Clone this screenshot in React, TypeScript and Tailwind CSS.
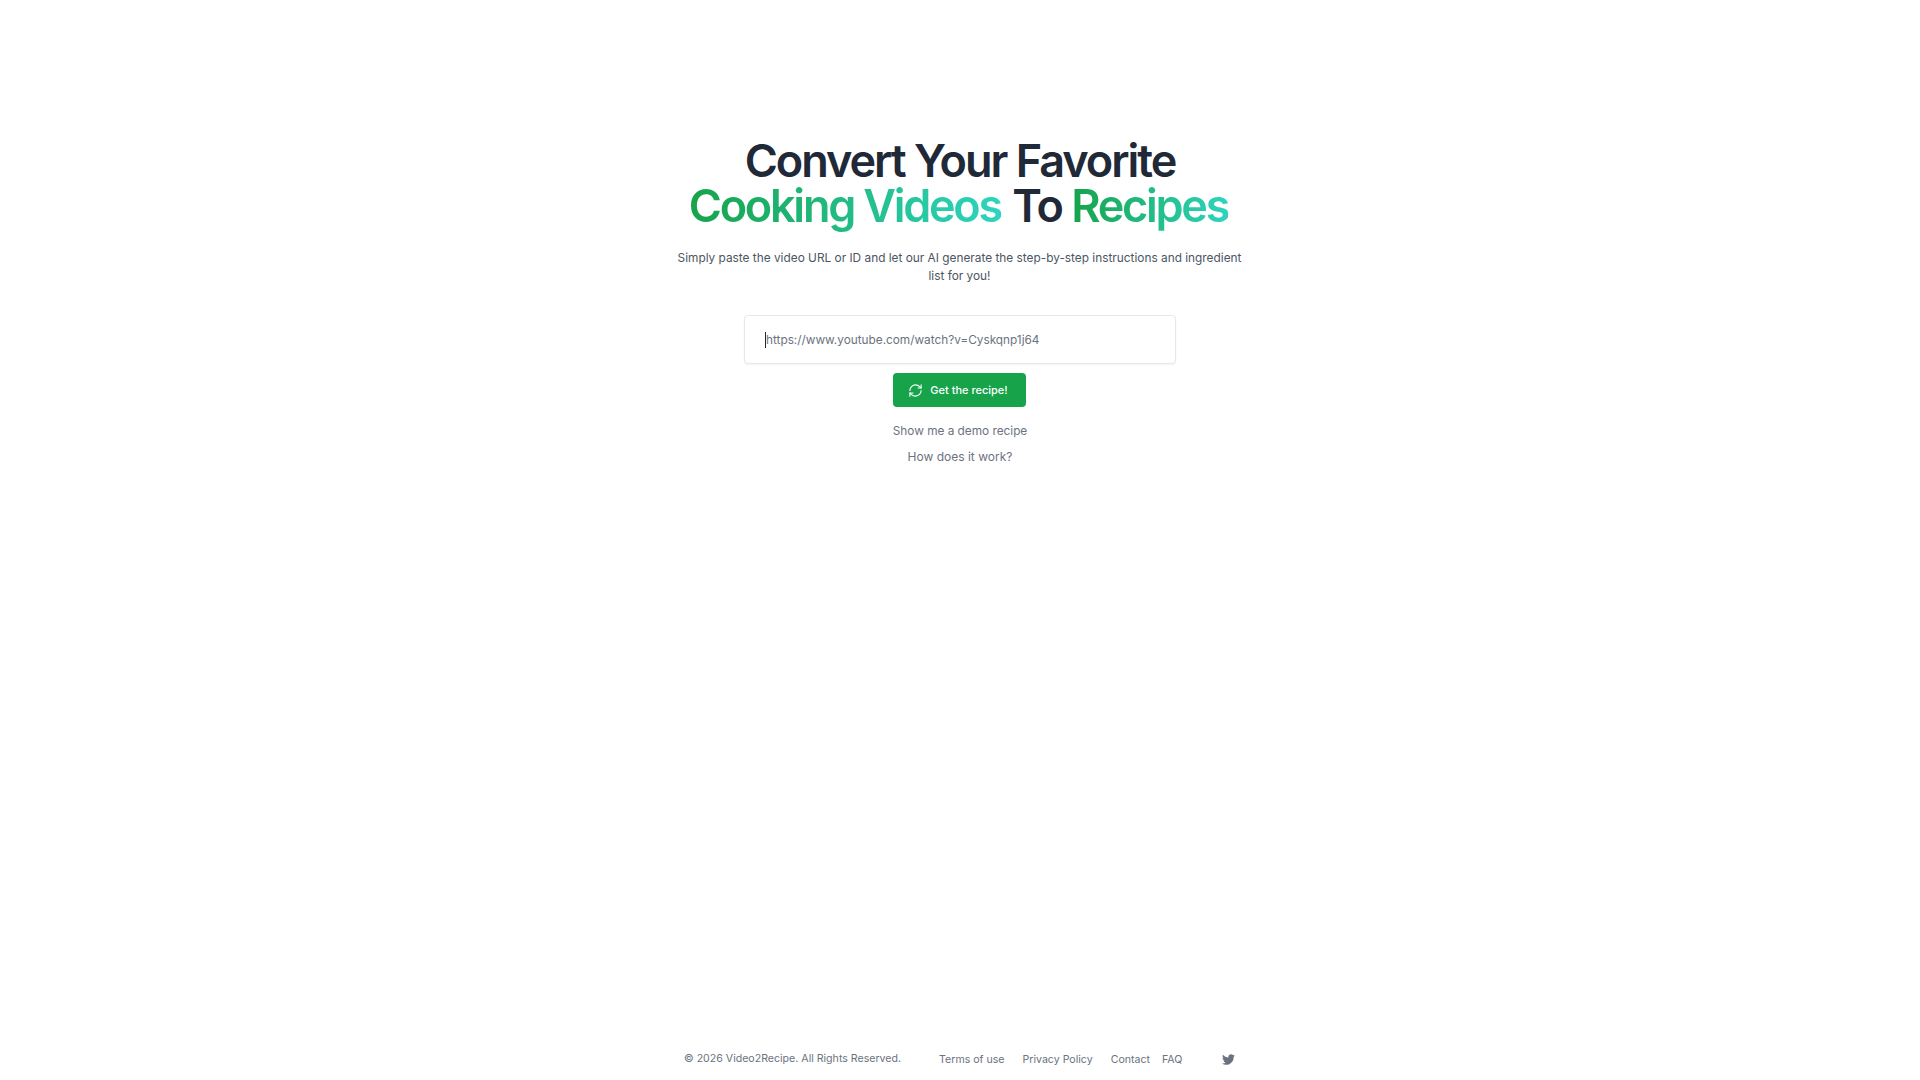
import { RefreshCw } from "lucide-react";
import { FaTwitter } from "react-icons/fa";

export default function App() {
  return (
    <div className="min-h-screen flex flex-col items-center bg-white font-['Inter',sans-serif] text-[#6b7280]">
      {/* Hero */}
      <main className="flex-1 flex flex-col items-center pt-[138px] w-[576px]">
        <h1 className="text-[45px] leading-[45px] font-semibold tracking-[-0.045em] text-[#1f2937] text-center whitespace-nowrap">
          Convert Your Favorite
          <br />
          <span className="tracking-[-0.05em] bg-linear-to-r/srgb from-[#16a34a] to-[#2dd4bf] bg-clip-text text-transparent">Cooking Videos</span>
          <span className="ml-[2px]"> To </span>
          <span className="mr-[3px] tracking-[-0.05em] bg-linear-to-r/srgb from-[#16a34a] to-[#2dd4bf] bg-clip-text text-transparent">Recipes</span>
        </h1>
        <p className="mt-[21px] mr-px text-[11.85px] leading-[18px] text-[#4b5563] text-center">
          Simply paste the video URL or ID and let our AI generate the step-by-step instructions and ingredient list for you!
        </p>

        {/* URL form */}
        <div className="relative mt-[30px] w-[432px]">
          <input
            type="text"
            placeholder="https://www.youtube.com/watch?v=Cyskqnp1j64"
            className="w-full h-[49px] px-[21px] bg-white border border-gray-200 rounded-sm text-[11.8px] shadow-xs outline-none placeholder:text-[#6b7280]"
          />
          <span className="absolute left-[21px] top-[17px] w-px h-[16px] bg-[#1f2937]"></span>
        </div>
        <button className="mt-[9px] mr-px w-[133px] h-[34px] pr-[3px] flex items-center justify-center gap-[7px] bg-[#16a34a] rounded-sm text-white text-[11px] font-medium">
          <RefreshCw size={15} strokeWidth={1.75} />
          Get the recipe!
        </button>
        <a className="mt-[15px] text-[11.8px] leading-[18px]">Show me a demo recipe</a>
        <a className="mt-[8px] text-[12px] leading-[18px]">How does it work?</a>
      </main>

      {/* Footer */}
      <footer className="flex items-center w-[552px] h-[42px] whitespace-nowrap text-[10.6px] text-[#6b7280]">
        <span>© 2026 Video2Recipe. All Rights Reserved.</span>
        <a className="ml-[38px] pt-px">Terms of use</a>
        <a className="ml-[18px] pt-px">Privacy Policy</a>
        <a className="ml-[18px] pt-px">Contact</a>
        <a className="ml-[12px] pt-px">FAQ</a>
        <a className="ml-[40px]">
          <FaTwitter size={13} />
        </a>
      </footer>
    </div>
  );
}
